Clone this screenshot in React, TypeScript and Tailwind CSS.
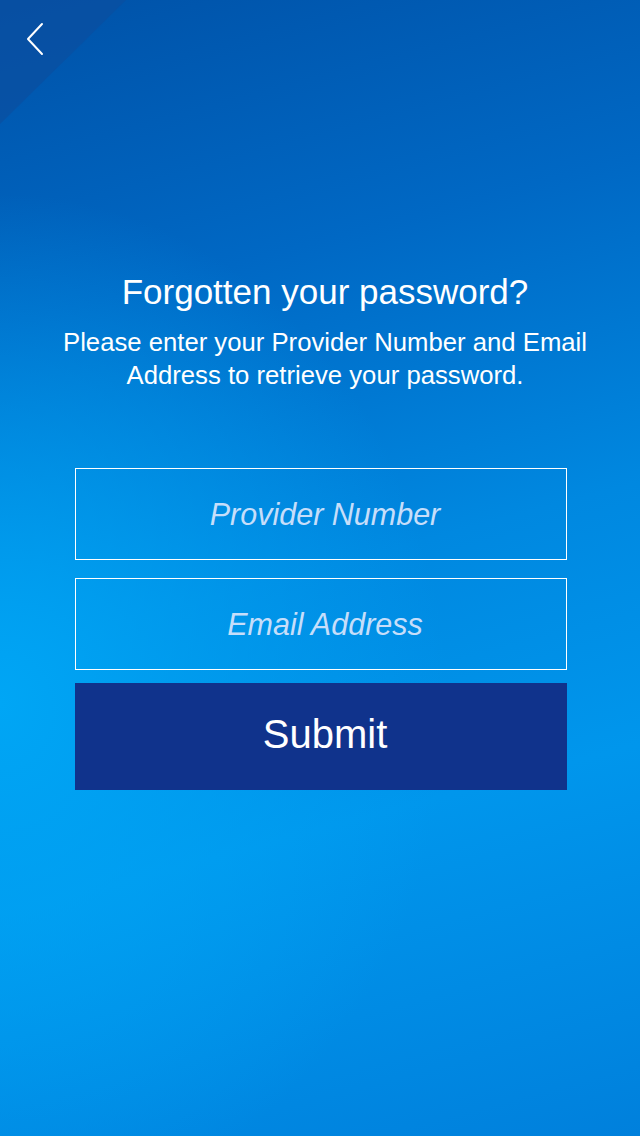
export default function App() {
  return (
    <div
      className="relative w-[640px] h-[1136px] overflow-hidden bg-[radial-gradient(ellipse_70%_45%_at_0%_62%,#00a6f5_0%,rgba(0,160,245,0)_100%),linear-gradient(165deg,#0052a8_0%,#0068c4_25%,#0088e0_50%,#0096ec_70%,#0080dc_100%)]"
      style={{ fontFamily: '"Liberation Sans", Arial, sans-serif' }}
    >
      {/* darker corner behind the back arrow */}
      <div className="absolute left-0 top-0 w-[126px] h-[124px] bg-[#0a4f9f]/70 [clip-path:polygon(0_0,100%_0,0_100%)]" />
      <button className="absolute left-[20px] top-[18px] w-[30px] h-[42px] flex items-center justify-center">
        <svg width="20" height="34" viewBox="0 0 20 34" fill="none">
          <path d="M17 2 L3 17 L17 32" stroke="white" strokeWidth="2" strokeLinecap="round" strokeLinejoin="round" />
        </svg>
      </button>

      <div className="flex flex-col items-center pt-[270px] pl-[10px] text-white">
        <h1 className="text-[35px] leading-[44px]">Forgotten your password?</h1>
        <p className="mt-[12px] text-[25.7px] leading-[33px] text-center">
          Please enter your Provider Number and Email
          <br />
          Address to retrieve your password.
        </p>
      </div>

      <div className="mt-[76px] ml-[75px] w-[492px] flex flex-col">
        <input
          placeholder="Provider Number"
          className="h-[92px] w-full border border-white bg-transparent pl-[8px] text-center text-[30.5px] italic text-white placeholder:text-[#c6defa] outline-none"
        />
        <input
          placeholder="Email Address"
          className="mt-[18px] h-[92px] w-full border border-white bg-transparent pl-[8px] text-center text-[30.5px] italic text-white placeholder:text-[#c6defa] outline-none"
        />
        <button className="mt-[13px] h-[107px] w-full bg-[#10338c] pl-[8px] pb-[5px] text-[40px] text-white">
          Submit
        </button>
      </div>
    </div>
  );
}
